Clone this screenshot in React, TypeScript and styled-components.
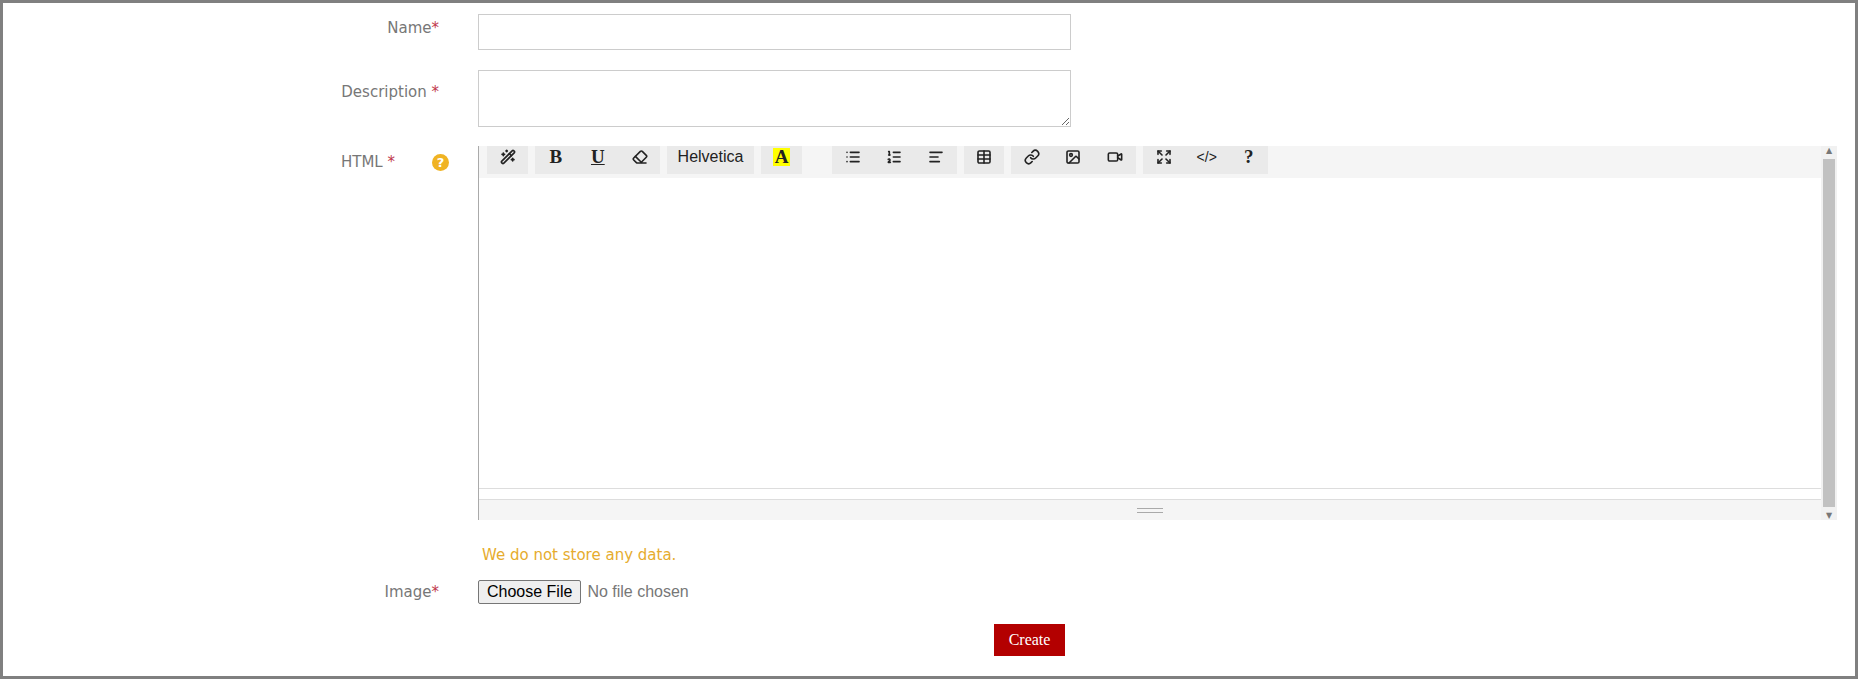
import React from "react";
import styled, { createGlobalStyle } from "styled-components";
import {
  Wand2,
  Eraser,
  List,
  ListOrdered,
  AlignLeft,
  Table,
  Link,
  Image,
  Video,
  Expand,
} from "lucide-react";

const Global = createGlobalStyle`
  html, body { margin: 0; padding: 0; background: #fff; }
  body { font-family: "DejaVu Sans", Verdana, sans-serif; }
`;

const Frame = styled.div`
  box-sizing: border-box;
  width: 1858px;
  height: 679px;
  border: 3px solid #808080;
  padding-top: 11px;
`;

const Row = styled.div<{ $mt?: number }>`
  display: grid;
  grid-template-columns: 436px 39px 1fr;
  margin-top: ${(p) => p.$mt ?? 0}px;
  align-items: start;
`;

const Label = styled.div<{ $pt?: number }>`
  grid-column: 1;
  text-align: right;
  color: #777;
  font-size: 15px;
  padding-top: ${(p) => p.$pt ?? 0}px;
`;

const Star = styled.span`
  color: #c0394b;
`;

const Cell = styled.div`
  grid-column: 3;
  display: flex;
  flex-direction: column;
`;

const Input = styled.input`
  box-sizing: border-box;
  width: 593px;
  height: 36px;
  border: 1px solid #ccc;
`;

const TextArea = styled.textarea`
  box-sizing: border-box;
  width: 593px;
  height: 57px;
  border: 1px solid #ccc;
  resize: vertical;
`;

const HtmlLabel = styled.div`
  grid-column: 1 / span 2;
  display: flex;
  justify-content: flex-end;
  align-items: center;
  gap: 37px;
  color: #777;
  font-size: 15px;
  padding-top: 7px;
  padding-right: 29px;
`;

const Help = styled.span`
  width: 17px;
  height: 17px;
  border-radius: 50%;
  background: #f0b323;
  color: #fff;
  font-weight: bold;
  font-size: 13px;
  display: inline-flex;
  align-items: center;
  justify-content: center;
`;

const Editor = styled.div`
  display: flex;
  width: 1359px;
  height: 374px;
`;

const EditorBody = styled.div`
  flex: 1;
  display: flex;
  flex-direction: column;
  border-left: 1px solid #aaa;
`;

const Toolbar = styled.div`
  height: 32px;
  background: #f5f5f5;
  display: flex;
  gap: 7px;
  padding-left: 8px;
  align-items: flex-start;
  overflow: hidden;
`;

const Group = styled.div<{ $w: number }>`
  width: ${(p) => p.$w}px;
  height: 34px;
  margin-top: -6px;
  background: #eaeaea;
  display: flex;
  align-items: center;
  justify-content: space-around;
  color: #222;
  font-size: 15px;
`;

const Glyph = styled.span<{ $u?: boolean; $hl?: boolean }>`
  font-family: "Liberation Serif", serif;
  font-weight: bold;
  font-size: 19px;
  text-decoration: ${(p) => (p.$u ? "underline" : "none")};
  background: ${(p) => (p.$hl ? "#ffff00" : "transparent")};
  padding: 0 2px;
  line-height: 18px;
`;

const Font = styled.span`
  font-family: "Liberation Sans", Arial, sans-serif;
  font-size: 16px;
`;

const Content = styled.div`
  flex: 1;
  background: #fff;
  border-bottom: 1px solid #ddd;
`;

const Gap = styled.div`
  height: 10px;
  background: #fff;
  border-bottom: 1px solid #ddd;
`;

const Status = styled.div`
  height: 20px;
  background: #f5f5f5;
  display: flex;
  justify-content: center;
  align-items: center;
`;

const Handle = styled.div`
  width: 26px;
  height: 5px;
  border-top: 1px solid #aaa;
  border-bottom: 1px solid #aaa;
  box-sizing: border-box;
`;

const Scrollbar = styled.div`
  width: 16px;
  background: #f1f1f1;
  display: flex;
  flex-direction: column;
  align-items: center;
  font-size: 8px;
  color: #777;
`;

const Thumb = styled.div`
  flex: 1;
  width: 12px;
  background: #c1c1c1;
  margin: 4px 0;
`;

const Note = styled.div`
  color: #e6ac2e;
  font-size: 15px;
  margin-top: 26px;
  padding-left: 4px;
`;

const FileRow = styled.div`
  display: flex;
  align-items: center;
  gap: 6px;
  font-family: "Liberation Sans", Arial, sans-serif;
  font-size: 16px;
  color: #777;
`;

const FileButton = styled.button`
  font-family: "Liberation Sans", Arial, sans-serif;
  font-size: 16px;
  padding: 2px 8px;
  border: 1px solid #767676;
  border-radius: 2px;
  background: #efefef;
  color: #000;
`;

const Create = styled.button`
  margin: 20px 0 0 516px;
  width: 71px;
  height: 32px;
  background: #b30000;
  color: #fff;
  border: none;
  font-family: "Liberation Serif", serif;
  font-size: 16px;
`;

const ic = { size: 16, strokeWidth: 2.4 };

export default function App() {
  return (
    <Frame>
      <Global />
      <Row>
        <Label $pt={5}>
          Name<Star>*</Star>
        </Label>
        <Cell>
          <Input />
        </Cell>
      </Row>
      <Row $mt={20}>
        <Label $pt={13}>
          Description <Star>*</Star>
        </Label>
        <Cell>
          <TextArea />
        </Cell>
      </Row>
      <Row $mt={19}>
        <HtmlLabel>
          <span>
            HTML <Star>*</Star>
          </span>
          <Help>?</Help>
        </HtmlLabel>
        <Cell>
          <Editor>
            <EditorBody>
              <Toolbar>
                <Group $w={41}>
                  <Wand2 {...ic} />
                </Group>
                <Group $w={125}>
                  <Glyph>B</Glyph>
                  <Glyph $u>U</Glyph>
                  <Eraser {...ic} />
                </Group>
                <Group $w={87}>
                  <Font>Helvetica</Font>
                </Group>
                <Group $w={41}>
                  <Glyph $hl>A</Glyph>
                </Group>
                <Group $w={125} style={{ marginLeft: 23 }}>
                  <List {...ic} />
                  <ListOrdered {...ic} />
                  <AlignLeft {...ic} />
                </Group>
                <Group $w={40}>
                  <Table {...ic} />
                </Group>
                <Group $w={125}>
                  <Link {...ic} />
                  <Image {...ic} />
                  <Video {...ic} />
                </Group>
                <Group $w={125}>
                  <Expand {...ic} />
                  <Font style={{ fontSize: 14 }}>&lt;/&gt;</Font>
                  <Glyph>?</Glyph>
                </Group>
              </Toolbar>
              <Content />
              <Gap />
              <Status>
                <Handle />
              </Status>
            </EditorBody>
            <Scrollbar>
              <span>▲</span>
              <Thumb />
              <span>▼</span>
            </Scrollbar>
          </Editor>
          <Note>We do not store any data.</Note>
        </Cell>
      </Row>
      <Row $mt={16}>
        <Label $pt={3}>
          Image<Star>*</Star>
        </Label>
        <Cell>
          <FileRow>
            <FileButton>Choose File</FileButton>
            No file chosen
          </FileRow>
          <Create>Create</Create>
        </Cell>
      </Row>
    </Frame>
  );
}
